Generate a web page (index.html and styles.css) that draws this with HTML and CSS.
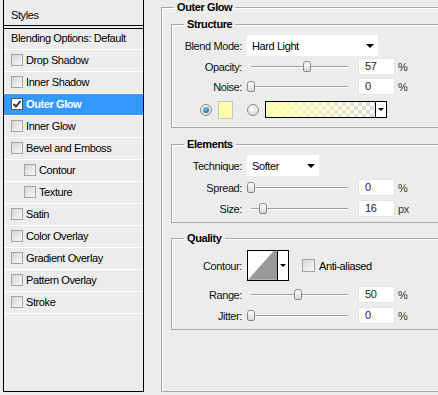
FILE: index.html
```html
<!DOCTYPE html>
<html>

<head>
    <link rel="stylesheet" href="styles.css">
</head>

<body>
    <div class="dialog">
        <div class="styles-panel">
            <div class="styles-head">Styles</div>
            <ul class="style-list">
                <li>Blending Options: Default</li>
                <li><span class="check"></span>Drop Shadow</li>
                <li><span class="check"></span>Inner Shadow</li>
                <li class="selected">
                    <span class="check checked">
                        <svg width="10" height="10" viewBox="0 0 10 10"><path d="M1.5 5 L4 7.5 L8.5 2" fill="none" stroke="#1d2a44" stroke-width="1.8"/></svg>
                    </span>Outer Glow
                </li>
                <li><span class="check"></span>Inner Glow</li>
                <li><span class="check"></span>Bevel and Emboss</li>
                <li class="sub"><span class="check"></span>Contour</li>
                <li class="sub"><span class="check"></span>Texture</li>
                <li><span class="check"></span>Satin</li>
                <li><span class="check"></span>Color Overlay</li>
                <li><span class="check"></span>Gradient Overlay</li>
                <li><span class="check"></span>Pattern Overlay</li>
                <li><span class="check"></span>Stroke</li>
            </ul>
        </div>

        <fieldset class="effect">
            <legend class="effect-title">Outer Glow</legend>

            <fieldset class="group structure">
                <legend>Structure</legend>
                <div class="row blend">
                    <span class="lbl">Blend Mode:</span>
                    <div class="select wide"><span>Hard Light</span><span class="arrow"></span></div>
                </div>
                <div class="row field">
                    <span class="lbl">Opacity:</span>
                    <div class="slider"><span class="knob" style="left:60px"></span></div>
                    <span class="num">57</span><span class="unit">%</span>
                </div>
                <div class="row field">
                    <span class="lbl">Noise:</span>
                    <div class="slider"><span class="knob" style="left:4px"></span></div>
                    <span class="num">0</span><span class="unit">%</span>
                </div>
                <div class="color-row">
                    <span class="radio on"></span>
                    <span class="swatch"></span>
                    <span class="radio"></span>
                    <div class="gradient">
                        <span class="gradient-fill"></span>
                        <span class="gradient-drop"><span class="arrow small"></span></span>
                    </div>
                </div>
            </fieldset>

            <fieldset class="group elements">
                <legend>Elements</legend>
                <div class="row blend">
                    <span class="lbl">Technique:</span>
                    <div class="select narrow"><span>Softer</span><span class="arrow"></span></div>
                </div>
                <div class="row field">
                    <span class="lbl">Spread:</span>
                    <div class="slider"><span class="knob" style="left:4px"></span></div>
                    <span class="num">0</span><span class="unit">%</span>
                </div>
                <div class="row field">
                    <span class="lbl">Size:</span>
                    <div class="slider"><span class="knob" style="left:16px"></span></div>
                    <span class="num">16</span><span class="unit">px</span>
                </div>
            </fieldset>

            <fieldset class="group quality">
                <legend>Quality</legend>
                <div class="row contour-row">
                    <span class="lbl">Contour:</span>
                    <div class="contour">
                        <svg class="curve" width="30" height="29" viewBox="0 0 30 29">
                            <rect width="30" height="29" fill="#fff"/>
                            <polygon points="0,29 26,0 30,0 30,29" fill="#999"/>
                        </svg>
                        <span class="contour-drop"><span class="arrow small"></span></span>
                    </div>
                    <span class="check aa"></span><span>Anti-aliased</span>
                </div>
                <div class="row field">
                    <span class="lbl">Range:</span>
                    <div class="slider"><span class="knob" style="left:51px"></span></div>
                    <span class="num">50</span><span class="unit">%</span>
                </div>
                <div class="row field">
                    <span class="lbl">Jitter:</span>
                    <div class="slider"><span class="knob" style="left:4px"></span></div>
                    <span class="num">0</span><span class="unit">%</span>
                </div>
            </fieldset>
        </fieldset>
    </div>
</body>

</html>
```

FILE: styles.css
```css
body {
    margin: 0;
    background: #ececec;
    color: #000;
    font-family: "Liberation Sans", Arial, sans-serif;
    font-size: 11px;
    letter-spacing: -0.4px;
    overflow: hidden;
}

.dialog {
    display: flex;
    align-items: flex-start;
    width: 438px;
    height: 395px;
    overflow: hidden;
}

/* left list of layer styles */

.styles-panel {
    flex-shrink: 0;
    display: flex;
    flex-direction: column;
    box-sizing: border-box;
    width: 141px;
    height: 392px;
    margin-left: 3px;
    border: 1px solid #000;
    border-top: none;
}

.styles-head {
    display: flex;
    align-items: center;
    box-sizing: border-box;
    height: 26px;
    padding: 4px 0 0 7px;
    border-bottom: 1px solid #000;
}

.style-list {
    flex: 1;
    list-style: none;
    margin: 2px 0 0;
    padding: 0;
    border-top: 1px solid #000;
}

.style-list li {
    display: flex;
    align-items: center;
    box-sizing: border-box;
    height: 22px;
    padding: 0 0 2px 7px;
    border-bottom: 1px solid #fff;
}

.style-list li:first-child {
    height: 21px;
}

.style-list li.sub {
    padding-left: 20px;
}

.style-list li.selected {
    background: #3399ff;
    color: #fff;
    font-weight: bold;
}

.check {
    flex-shrink: 0;
    display: flex;
    align-items: center;
    justify-content: center;
    box-sizing: border-box;
    width: 12px;
    height: 12px;
    margin-right: 3px;
    border: 1px solid #a4a4a4;
    background: linear-gradient(135deg, #d6d6d6, #f7f7f7);
}

.check.checked {
    border-color: #555;
    background: #fff;
}

/* right side group boxes */

.effect {
    flex-shrink: 0;
    box-sizing: border-box;
    width: 320px;
    min-width: 0;
    height: 391px;
    margin: 1px 0 0 17px;
    padding: 0 0 0 9px;
    border: 1px solid #a8a8a8;
    box-shadow: inset 1px 1px 0 #fff;
}

legend {
    padding: 0 3px;
    line-height: 13px;
    font-weight: bold;
}

.effect-title {
    margin-left: 3px;
}

.group {
    min-width: 0;
    margin: 4px 0 0;
    padding: 4px 0 8px;
    border: 1px solid #a8a8a8;
    box-shadow: inset 1px 1px 0 #fff;
}

.group legend {
    margin-left: 12px;
}

.elements {
    margin-top: 10px;
    padding-bottom: 5px;
}

.quality {
    margin-top: 9px;
    padding: 5px 0 5px;
}

.row {
    display: flex;
    align-items: center;
}

.row.blend {
    height: 21px;
}

.row.field {
    height: 17px;
    margin-top: 2px;
}

.blend + .field {
    margin-top: 2px;
}

.field + .field {
    margin-top: 3px;
}

.elements .blend + .field {
    margin-top: 3px;
}

.elements .field + .field {
    margin-top: 4px;
}

.quality .contour-row + .field {
    margin-top: 5px;
}

.quality .field + .field {
    margin-top: 4px;
}

.lbl {
    flex-shrink: 0;
    width: 70px;
    margin-right: 5px;
    text-align: right;
    color: #111;
}

.select {
    display: flex;
    align-items: center;
    justify-content: space-between;
    box-sizing: border-box;
    height: 21px;
    padding: 0 4px 0 5px;
    background: #fff;
}

.select.wide {
    width: 131px;
}

.select.narrow {
    width: 72px;
}

.arrow {
    width: 0;
    height: 0;
    border-left: 4px solid transparent;
    border-right: 4px solid transparent;
    border-top: 4px solid #000;
}

.arrow.small {
    border-left-width: 3px;
    border-right-width: 3px;
    border-top-width: 3px;
}

.slider {
    position: relative;
    flex-shrink: 0;
    width: 101px;
    height: 17px;
    margin-right: 10px;
}

.slider::before {
    content: "";
    position: absolute;
    left: 4px;
    right: 0;
    top: 8px;
    height: 1px;
    background: #a0a0a0;
    box-shadow: 0 1px 0 #fff;
}

.knob {
    position: absolute;
    top: 3px;
    box-sizing: border-box;
    width: 8px;
    height: 11px;
    margin-left: -4px;
    border: 1px solid #8a8a8a;
    border-radius: 3px 3px 2px 2px;
    background: linear-gradient(#fff, #d8d8d8);
}

.num {
    flex-shrink: 0;
    box-sizing: border-box;
    width: 37px;
    height: 17px;
    padding-left: 6px;
    line-height: 15px;
    border: 1px solid #e4e4e4;
    background: #fff;
    color: #222;
}

.unit {
    margin-left: 3px;
    color: #333;
}

.color-row {
    display: flex;
    align-items: center;
    height: 19px;
    margin-top: 5px;
    padding-left: 28px;
}

.radio {
    flex-shrink: 0;
    display: flex;
    align-items: center;
    justify-content: center;
    box-sizing: border-box;
    width: 12px;
    height: 12px;
    border: 1px solid #8c8c8c;
    border-radius: 50%;
    background: radial-gradient(circle at 40% 35%, #fff, #d0d0d0);
}

.radio.on::after {
    content: "";
    width: 6px;
    height: 6px;
    border-radius: 50%;
    background: radial-gradient(circle at 40% 35%, #7cc0ee, #0b4f8a);
}

.swatch {
    box-sizing: border-box;
    width: 15px;
    height: 18px;
    margin: 0 14px 0 6px;
    border: 1px solid #c4c4c4;
    background: #fffcaa;
}

.gradient {
    display: flex;
    box-sizing: border-box;
    width: 122px;
    height: 17px;
    margin-left: 6px;
    border: 1px solid #000;
}

.gradient-fill {
    flex: 1;
    background: linear-gradient(to right, #ffffb0, rgba(255, 255, 176, 0)), repeating-conic-gradient(#dadada 0 25%, #fff 0 50%) 0 0 / 8px 8px;
}

.gradient-drop,
.contour-drop {
    display: flex;
    align-items: center;
    justify-content: center;
    width: 10px;
    border-left: 1px solid #000;
    background: #fff;
}

.contour-row {
    height: 31px;
}

.contour {
    display: flex;
    box-sizing: border-box;
    width: 42px;
    height: 31px;
    border: 1px solid #000;
}

.curve {
    display: block;
}

.check.aa {
    width: 13px;
    height: 13px;
    margin: 0 4px 0 13px;
}
```
